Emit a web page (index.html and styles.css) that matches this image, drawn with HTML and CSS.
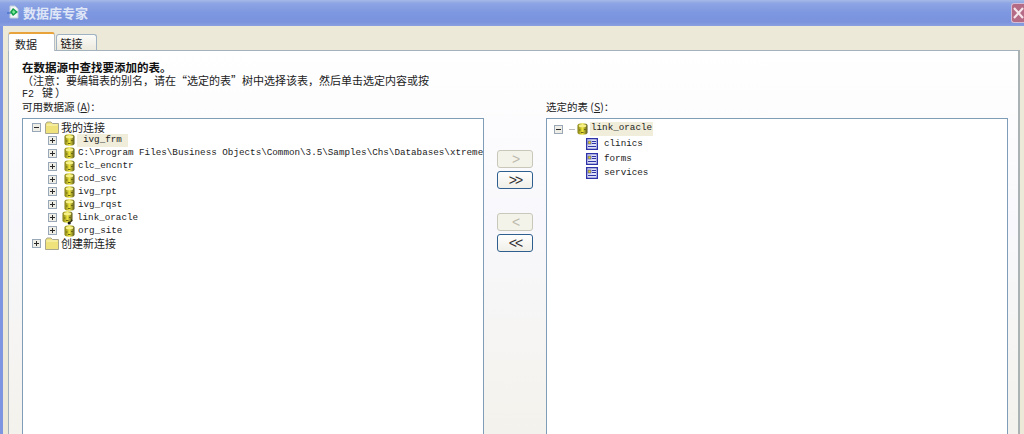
FILE: index.html
```html
<!DOCTYPE html>
<html lang="zh-CN">
<head>
<meta charset="utf-8">
<title>数据库专家</title>
<link rel="stylesheet" href="styles.css">
</head>
<body>
<svg class="defs" width="0" height="0" aria-hidden="true">
  <defs>
    <linearGradient id="cyl" x1="0" x2="1" y1="0" y2="0">
      <stop offset="0" stop-color="#7f7a14"/><stop offset=".5" stop-color="#eee53c"/><stop offset="1" stop-color="#55531a"/>
    </linearGradient>
    <symbol id="plus" viewBox="0 0 9 9"><rect x=".5" y=".5" width="8" height="8" fill="#eeeee6" stroke="#98a8b8"/><path d="M2 4.500h5M4.500 2v5" stroke="#2a2a2a"/></symbol>
    <symbol id="minus" viewBox="0 0 9 9"><rect x=".5" y=".5" width="8" height="8" fill="#eeeee6" stroke="#98a8b8"/><path d="M2 4.500h5" stroke="#2a2a2a"/></symbol>
    <symbol id="db" viewBox="0 0 11 12"><path d="M.5 2.500C.5 1 2.500 .3 5.500 .3s5 .7 5 2.200v7c0 1.500-2 2.200-5 2.200s-5-.7-5-2.200z" fill="url(#cyl)"/><ellipse cx="5.500" cy="2.800" rx="3.800" ry="1.500" fill="#f6f08a"/><path d="M2 7h1.500M7 6.500h2M4 9.500h2.500" stroke="#6a6814"/></symbol>
    <symbol id="folder" viewBox="0 0 14 13"><path d="M.5 3 2 1h4l1.500 1.500h6v10H.5z" fill="#efe27a" stroke="#a8a690"/><path d="M1.500 4h11" stroke="#fbf6c0"/></symbol>
    <symbol id="table" viewBox="0 0 12 12"><rect width="12" height="12" fill="#2f33a8"/><rect x="1.300" y="1.300" width="9.400" height="9.400" fill="#dfe2f6"/><rect x="2" y="3" width="3" height="3" fill="#e6d420" stroke="#2f33a8" stroke-width=".6"/><path d="M6 3.500h4M6 5.500h4M2 8.500h8" stroke="#2f33a8"/></symbol>
    <symbol id="link" viewBox="0 0 6 6"><path d="M4.500 .5C5.500 2 4 2.500 3 3" fill="none" stroke="#1a1a1a"/><circle cx="2.200" cy="4" r="1.600" fill="#1a1a1a"/></symbol>
  </defs>
</svg>

<div class="window">
  <header class="titlebar">
    <svg class="app-icon" width="16" height="16" viewBox="0 0 16 16" aria-hidden="true"><path d="M5 2h5l3 3v9H5z" fill="#f2f6f8" stroke="#c4d0da"/><path d="M2 9h4" stroke="#3060c0"/><path d="M8 4l5 4-5 4-3-4z" fill="#12a04a"/><path d="M8.500 6l2 2-2 2-1.500-2z" fill="#7fe89a"/></svg>
    <span class="title">数据库专家</span>
    <span class="close"><svg width="12" height="12" viewBox="0 0 12 12" aria-hidden="true"><path d="M1 1l9 10M10 1 1 11" stroke="#f4e6ea" stroke-width="2.200"/></svg></span>
  </header>

  <div class="client">
    <nav class="tabs">
      <span class="tab active">数据</span>
      <span class="tab">链接</span>
    </nav>

    <section class="panel">
      <h1 class="heading">在数据源中查找要添加的表。</h1>
      <p class="note">（注意：要编辑表的别名，请在“选定的表”树中选择该表，然后单击选定内容或按<br><span class="mono-key">F2</span><span class="key-word">键）</span></p>

      <div class="columns">
        <div class="pane">
          <div class="pane-label">可用数据源 (<u>A</u>)：</div>
          <div class="listbox">
            <div class="row root"><svg class="box"><use href="#minus"/></svg><svg class="folder"><use href="#folder"/></svg><span class="cjk">我的连接</span></div>
            <div class="row child"><svg class="box"><use href="#plus"/></svg><svg class="db"><use href="#db"/></svg><span class="label selected">ivg_frm</span></div>
            <div class="row child"><svg class="box"><use href="#plus"/></svg><svg class="db"><use href="#db"/></svg><span class="label">C:\Program Files\Business Objects\Common\3.5\Samples\Chs\Databases\xtreme</span></div>
            <div class="row child"><svg class="box"><use href="#plus"/></svg><svg class="db"><use href="#db"/></svg><span class="label">clc_encntr</span></div>
            <div class="row child"><svg class="box"><use href="#plus"/></svg><svg class="db"><use href="#db"/></svg><span class="label">cod_svc</span></div>
            <div class="row child"><svg class="box"><use href="#plus"/></svg><svg class="db"><use href="#db"/></svg><span class="label">ivg_rpt</span></div>
            <div class="row child"><svg class="box"><use href="#plus"/></svg><svg class="db"><use href="#db"/></svg><span class="label">ivg_rqst</span></div>
            <div class="row child"><svg class="box"><use href="#plus"/></svg><span class="db-wrap"><svg class="db"><use href="#db"/></svg><svg class="link-badge"><use href="#link"/></svg></span><span class="label linked">link_oracle</span></div>
            <div class="row child"><svg class="box"><use href="#plus"/></svg><svg class="db"><use href="#db"/></svg><span class="label">org_site</span></div>
            <div class="row root"><svg class="box"><use href="#plus"/></svg><svg class="folder"><use href="#folder"/></svg><span class="cjk">创建新连接</span></div>
          </div>
        </div>

        <div class="mover">
          <button class="btn" disabled>&gt;</button>
          <button class="btn">&gt;&gt;</button>
          <button class="btn spaced" disabled>&lt;</button>
          <button class="btn">&lt;&lt;</button>
        </div>

        <div class="pane">
          <div class="pane-label">选定的表 (<u>S</u>)：</div>
          <div class="listbox right">
            <div class="row sel-root"><svg class="box"><use href="#minus"/></svg><span class="dash"></span><svg class="db"><use href="#db"/></svg><span class="label selected tight">link_oracle</span></div>
            <div class="row tbl"><svg class="tbl-icon"><use href="#table"/></svg><span class="label">clinics</span></div>
            <div class="row tbl"><svg class="tbl-icon"><use href="#table"/></svg><span class="label">forms</span></div>
            <div class="row tbl"><svg class="tbl-icon"><use href="#table"/></svg><span class="label">services</span></div>
          </div>
        </div>
      </div>
    </section>
  </div>
</div>
</body>
</html>
```
FILE: styles.css
```css
* { box-sizing: border-box; }
html, body { margin: 0; height: 434px; overflow: hidden; background: #ece9d8; }
.defs { position: absolute; }
.window {
  width: 1024px; height: 434px; display: flex; flex-direction: column;
  font-family: "Noto Sans CJK SC", "Liberation Sans", sans-serif; color: #1a1a1a;
  overflow: hidden;
}
.titlebar {
  height: 26px; flex: none; display: flex; align-items: center; padding: 0 0 2px 5px;
  background: linear-gradient(#a8bbe8 0, #8ea6e4 3px, #7d97e0 50%, #7b93dd 85%, #8aa0e0 100%);
}
.app-icon { flex: none; }
.title { margin-left: 2px; font-size: 13px; font-weight: 700; color: #dfe6f7; }
.close {
  margin-left: auto; width: 13px; height: 20px; margin-top: 2px; overflow: hidden;
  background: #b56a85; border: 1px solid #d3bcd6; border-right: 0; border-radius: 3px 0 0 3px;
  display: flex; align-items: center; padding-left: 1px;
}
.close svg { flex: none; }
.client {
  flex: 1; min-height: 0; display: flex; flex-direction: column;
  border-left: 3px solid #7e96e2; padding: 6px 4px 0 5px;
  background: #ece9d8;
}
.tabs { display: flex; height: 18px; flex: none; align-items: flex-end; position: relative; z-index: 1; }
.tab {
  width: 41px; height: 16px; margin-left: 1px; padding-right: 10px; font-size: 11px; line-height: 16px; text-align: center;
  background: linear-gradient(#fbfbf8, #ece9dd); border: 1px solid #9fb2c4; border-bottom: 0; border-radius: 3px 3px 0 0;
}
.tab.active {
  width: 47px; height: 19px; margin: 0 0 -1px; padding-right: 11px; line-height: 20px; background: #fff;
  border-color: #b7c0c8; border-top: 2px solid #e8a33a;
}
.panel {
  flex: 1; min-height: 0; padding: 8px 10px 0 13px;
  background: linear-gradient(#fff, #f8f8fc 45%, #f4f2ec);
  border: 1px solid #a4b2bd; border-right: 2px solid #aab2b4; border-bottom: 0;
  display: flex; flex-direction: column;
}
.heading { margin: 0; font-size: 11.500px; line-height: 16px; font-weight: 700; color: #111; }
.note { margin: -1px 0 0; font-size: 11px; line-height: 12px; color: #222; width: 420px; }
.mono-key { font-family: "Liberation Mono", monospace; font-size: 10px; }
.key-word { margin-left: 8px; letter-spacing: 2px; }
.columns { display: flex; flex: 1; min-height: 0; margin-top: -1px; }
.pane { width: 462px; flex: none; display: flex; flex-direction: column; }
.pane-label { height: 18px; font-size: 10.500px; line-height: 14px; color: #222; }
.listbox {
  flex: 1; background: #fff; border: 1px solid #7f9db9; border-bottom: 0; padding: 2px 0 0 9px; overflow: hidden;
}
.listbox.right { padding: 2px 0 0 7px; }
.row { height: 12.900px; display: flex; align-items: center; white-space: nowrap; }
.root .box { margin-right: 4px; }
.child { padding-left: 16px; }
.box { width: 9px; height: 9px; flex: none; }
.folder { width: 14px; height: 13px; flex: none; margin-right: 2px; }
.db { width: 11px; height: 12px; flex: none; margin-left: 7px; }
.db-wrap { position: relative; display: block; width: 18px; height: 12px; flex: none; }
.db-wrap .db { margin-left: 5px; display: block; margin-top: -1px; }
.link-badge { position: absolute; left: 10px; top: 7px; width: 6px; height: 6px; }
.cjk { font-size: 11px; line-height: 12px; color: #222; }
.label {
  font-family: "Liberation Mono", monospace; font-size: 9.250px; line-height: 12px; color: #222; margin-left: 3px;
}
.label.linked { margin-left: 2px; }
.selected { background: #f0eddb; height: 13px; }
.child .selected { margin-left: 2px; padding: 0 6px 0 6px; }
.mover { width: 62px; flex: none; padding-top: 50px; display: flex; flex-direction: column; align-items: center; }
.btn {
  width: 36px; height: 18px; padding: 0; margin-bottom: 3px; font-family: "Liberation Sans", sans-serif; font-size: 14px; line-height: 14px; letter-spacing: -2px;
  background: linear-gradient(#fefefe, #f0efe8); border: 1px solid #2f5f8e; border-radius: 3px; color: #333;
}
.btn:disabled { background: #f4f3ea; border-color: #c9c7ba; color: #bdbbae; }
.btn.spaced { margin-top: 21px; }
.sel-root { height: 16px; }
.dash { width: 6px; height: 1px; background: #bbb; margin-left: 6px; flex: none; }
.sel-root .db { margin-left: 2px; }
.sel-root .tight { margin-left: 2px; padding: 0 1px; height: 14px; }
.tbl { height: 14.500px; padding-left: 32px; }
.tbl-icon { width: 12px; height: 12px; flex: none; }
.tbl .label { margin-left: 6px; }
```
